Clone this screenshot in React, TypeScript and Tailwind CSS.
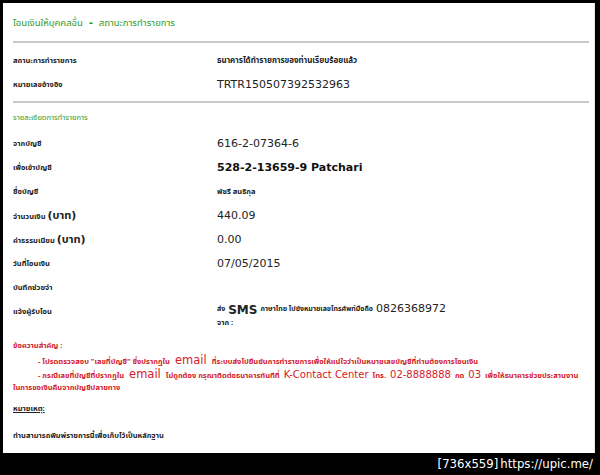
import React from "react";

const thai = "font-['Tahoma','Noto_Sans_Thai','Noto_Sans',sans-serif]";
const latin = "font-['DejaVu_Sans','Noto_Sans_Thai',sans-serif]";
// ตัวอักษรไทยขนาดเล็กแบบในหน้าธนาคาร
const small = `${thai} text-[7.5px] font-bold`;

type Row = { label: React.ReactNode; value?: React.ReactNode };

const rows: Row[] = [
  { label: "จากบัญชี", value: <span className={`${latin} text-[11px] text-[#222]`}>616-2-07364-6</span> },
  {
    label: "เพื่อเข้าบัญชี",
    value: <span className={`${latin} text-[11px] font-bold text-[#111]`}>528-2-13659-9 Patchari</span>,
  },
  { label: "ชื่อบัญชี", value: <span className={`${small} text-[#222]`}>พัชรี สนธิกุล</span> },
  {
    label: (
      <>
        จำนวนเงิน <span className={`${latin} text-[11px]`}>(บาท)</span>
      </>
    ),
    value: <span className={`${latin} text-[11px] text-[#222]`}>440.09</span>,
  },
  {
    label: (
      <>
        ค่าธรรมเนียม <span className={`${latin} text-[11px]`}>(บาท)</span>
      </>
    ),
    value: <span className={`${latin} text-[11px] text-[#222]`}>0.00</span>,
  },
  { label: "วันที่โอนเงิน", value: <span className={`${latin} text-[11px] text-[#222]`}>07/05/2015</span> },
  { label: "บันทึกช่วยจำ" },
];

function Divider() {
  return <div className="mr-[5px] h-[2px] bg-[#c9c9c9]" />;
}

function Label({ children }: { children: React.ReactNode }) {
  return <div className={`${small} w-[204px] shrink-0 text-[#222]`}>{children}</div>;
}

export default function App() {
  return (
    <div className="flex h-[475px] w-[600px] flex-col bg-black">
      {/* กล่องผลการโอน */}
      <div className="ml-[3px] mt-[3px] h-[450px] w-[592px] border-r border-[#e4e4e4] bg-white pl-[10px] pt-[12px]">
        <div className={`${thai} flex h-[16px] items-center text-[9.5px] text-[#2f9a2a]`}>
          โอนเงินให้บุคคลอื่น <span className="mx-[6px] text-[12px] font-bold">-</span> สถานะการทำรายการ
        </div>
        <div className="mt-[10px]">
          <Divider />
        </div>

        <div className="mt-[6px] flex h-[24px] items-center">
          <Label>สถานะการทำรายการ</Label>
          <span className={`${thai} text-[8px] font-bold text-[#222]`}>ธนาคารได้ทำรายการของท่านเรียบร้อยแล้ว</span>
        </div>
        <div className="flex h-[24px] items-center">
          <Label>หมายเลขอ้างอิง</Label>
          <span className={`${latin} text-[11px] text-[#222]`}>TRTR150507392532963</span>
        </div>
        <div className="mt-[4px]">
          <Divider />
        </div>

        {/* รายละเอียด */}
        <div className={`${thai} mt-[7px] flex h-[16px] items-center text-[7.5px] text-[#2f9a2a]`}>
          รายละเอียดการทำรายการ
        </div>
        <div className="mt-[6px] flex flex-col">
          {rows.map((r, i) => (
            <div key={i} className="flex h-[24px] items-center">
              <Label>{r.label}</Label>
              {r.value}
            </div>
          ))}
        </div>

        <div className="flex items-start">
          <div className="pt-[6px]">
            <Label>แจ้งผู้รับโอน</Label>
          </div>
          <div className="pt-[2px] text-[#222]">
            <div className="flex h-[15px] items-center gap-[3px]">
              <span className={`${thai} text-[7px] font-bold`}>ส่ง</span>
              <span className={`${latin} text-[12px] font-bold`}>SMS</span>
              <span className={`${thai} text-[7px] font-bold`}>ภาษาไทย ไปยังหมายเลขโทรศัพท์มือถือ</span>
              <span className={`${latin} text-[11px]`}>0826368972</span>
            </div>
            <div className={`${small} flex h-[12px] items-center`}>จาก :</div>
          </div>
        </div>

        {/* ข้อความสำคัญ */}
        <div className={`${small} mt-[10px] text-[#d3212b]`}>
          <div className="h-[14px] leading-[14px]">ข้อความสำคัญ :</div>
          <div className="h-[14px] whitespace-nowrap pl-[25px] leading-[14px]">
            - โปรดตรวจสอบ "เลขที่บัญชี" ซึ่งปรากฏใน
            <span className={`${latin} mx-[5px] text-[11.5px] font-normal`}>email</span>
            ที่ระบบส่งไปยืนยันการทำรายการเพื่อให้แน่ใจว่าเป็นหมายเลขบัญชีที่ท่านต้องการโอนเงิน
          </div>
          <div className="h-[14px] whitespace-nowrap pl-[25px] leading-[14px]">
            - กรณีเลขที่บัญชีที่ปรากฏใน
            <span className={`${latin} mx-[5px] text-[11.5px] font-normal`}>email</span>
            ไม่ถูกต้อง กรุณาติดต่อธนาคารทันทีที่
            <span className={`${latin} mx-[4px] text-[10px] font-normal`}>K-Contact Center</span>
            โทร.
            <span className={`${latin} mx-[4px] text-[10px] font-normal`}>02-8888888</span>
            กด
            <span className={`${latin} mx-[4px] text-[10px] font-normal`}>03</span>
            เพื่อให้ธนาคารช่วยประสานงาน
          </div>
          <div className="h-[14px] leading-[14px]">ในการขอเงินคืนจากบัญชีปลายทาง</div>
        </div>

        <div className={`${small} mt-[7px] h-[14px] leading-[14px] text-[#222] underline`}>หมายเหตุ:</div>
        <div className={`${small} mt-[13px] h-[14px] leading-[14px] text-[#222]`}>
          ท่านสามารถพิมพ์รายการนี้เพื่อเก็บไว้เป็นหลักฐาน
        </div>
      </div>

      {/* ลายน้ำ */}
      <div className="flex flex-1 items-center justify-end pr-[7px] font-['DejaVu_Sans_Condensed','DejaVu_Sans',sans-serif] text-[13px] text-white">
        [736x559]<span className="ml-[2px]">https://upic.me/</span>
      </div>
    </div>
  );
}
